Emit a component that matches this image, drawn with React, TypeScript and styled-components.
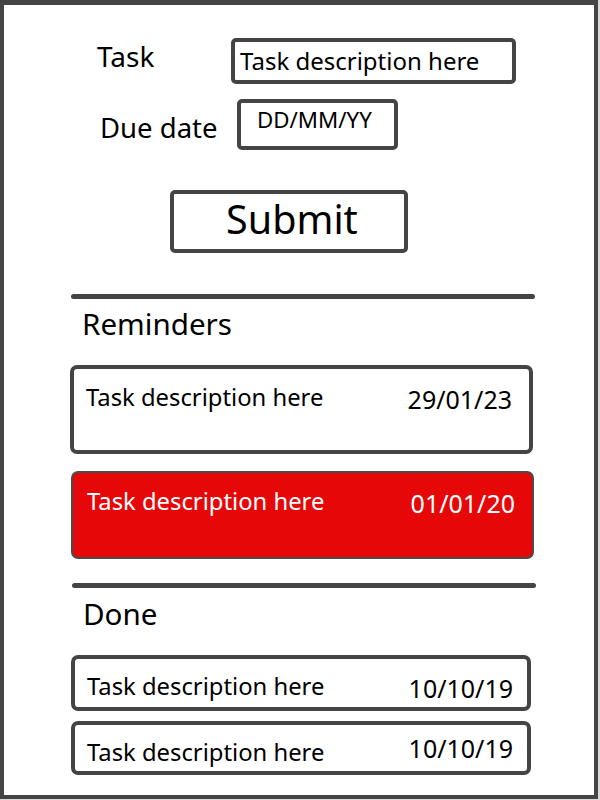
import React from "react";
import styled, { createGlobalStyle } from "styled-components";

const Global = createGlobalStyle`
  html, body { margin: 0; padding: 0; background: #d9d9d9; }
  body { font-family: "Noto Sans", "Open Sans", sans-serif; color: #000; }
`;

const Frame = styled.div`
  box-sizing: border-box;
  width: 598px;
  height: 799px;
  background: #fff;
  border: 4px solid #444;
  border-top-width: 5px;
  display: flex;
  flex-direction: column;
  overflow: hidden;
`;

const FieldRow = styled.div<{ $top: number }>`
  display: flex;
  align-items: center;
  margin-top: ${(p) => p.$top}px;
`;

const Label = styled.div<{ $left: number; $width: number; $shift: number; $size: number }>`
  margin-left: ${(p) => p.$left}px;
  width: ${(p) => p.$width}px;
  font-size: ${(p) => p.$size}px;
  line-height: 1;
  transform: translateY(${(p) => p.$shift}px);
`;

const InputBox = styled.div<{ $w: number; $h: number; $size: number; $pad: number; $shift: number }>`
  box-sizing: border-box;
  width: ${(p) => p.$w}px;
  height: ${(p) => p.$h}px;
  border: 4px solid #444;
  border-radius: 5px;
  display: flex;
  align-items: center;
  padding-left: ${(p) => p.$pad}px;
  font-size: ${(p) => p.$size}px;
  line-height: 1;
  span { transform: translateY(${(p) => p.$shift}px); }
`;

const SubmitButton = styled.button`
  box-sizing: border-box;
  margin: 40px 0 0 166px;
  width: 238px;
  height: 63px;
  border: 4px solid #444;
  border-radius: 5px;
  background: #fff;
  font-family: inherit;
  font-size: 39.5px;
  line-height: 1;
  color: #000;
  padding: 0 0 4px 6px;
  display: flex;
  align-items: center;
  justify-content: center;
`;

const Divider = styled.div<{ $top: number; $left: number }>`
  margin: ${(p) => p.$top}px 0 0 ${(p) => p.$left}px;
  width: 464px;
  height: 5px;
  border-radius: 3px;
  background: #444;
`;

const Heading = styled.div<{ $top: number; $left: number }>`
  margin: ${(p) => p.$top}px 0 0 ${(p) => p.$left}px;
  font-size: 29.6px;
  line-height: 1;
`;

const Card = styled.div<{ $top: number; $left: number; $w: number; $h: number; $alert?: boolean; $padTop: number; $padRight: number }>`
  box-sizing: border-box;
  margin: ${(p) => p.$top}px 0 0 ${(p) => p.$left}px;
  width: ${(p) => p.$w}px;
  height: ${(p) => p.$h}px;
  border: ${(p) => (p.$alert ? "2px solid #4a4a4a" : "4px solid #444")};
  border-radius: 7px;
  background: ${(p) => (p.$alert ? "#e60808" : "#fff")};
  color: ${(p) => (p.$alert ? "#fff" : "#000")};
  display: flex;
  justify-content: space-between;
  align-items: flex-start;
  padding: ${(p) => p.$padTop}px ${(p) => p.$padRight}px 0 ${(p) => (p.$alert ? 14 : 12)}px;
`;

const CardText = styled.span`
  font-size: 23.8px;
  line-height: 1;
`;

const CardDate = styled.span<{ $shift: number }>`
  font-size: 25px;
  line-height: 1;
  transform: translateY(${(p) => p.$shift}px);
`;

type Item = { text: string; date: string; alert?: boolean };

export default function App() {
  const reminders: Item[] = [
    { text: "Task description here", date: "29/01/23" },
    { text: "Task description here", date: "01/01/20", alert: true },
  ];
  const done: Item[] = [
    { text: "Task description here", date: "10/10/19" },
    { text: "Task description here", date: "10/10/19" },
  ];
  return (
    <>
      <Global />
      <Frame>
        <FieldRow $top={33}>
          <Label $left={93} $width={134} $shift={-5} $size={28}>Task</Label>
          <InputBox $w={285} $h={46} $size={24} $pad={5} $shift={0}>
            <span>Task description here</span>
          </InputBox>
        </FieldRow>
        <FieldRow $top={15}>
          <Label $left={96} $width={137} $shift={3} $size={27.5}>Due date</Label>
          <InputBox $w={161} $h={51} $size={22.3} $pad={16} $shift={-4}>
            <span>DD/MM/YY</span>
          </InputBox>
        </FieldRow>
        <SubmitButton>Submit</SubmitButton>
        <Divider $top={41} $left={67} />
        <Heading $top={10} $left={78}>Reminders</Heading>
        <Card $top={26} $left={66} $w={463} $h={89} $padTop={17} $padRight={17}>
          <CardText>{reminders[0].text}</CardText>
          <CardDate $shift={1}>{reminders[0].date}</CardDate>
        </Card>
        <Card $top={17} $left={67} $w={463} $h={88} $alert $padTop={17} $padRight={17}>
          <CardText>{reminders[1].text}</CardText>
          <CardDate $shift={1}>{reminders[1].date}</CardDate>
        </Card>
        <Divider $top={24} $left={68} />
        <Heading $top={11} $left={79}>Done</Heading>
        <Card $top={27} $left={67} $w={460} $h={56} $padTop={16} $padRight={14}>
          <CardText>{done[0].text}</CardText>
          <CardDate $shift={1}>{done[0].date}</CardDate>
        </Card>
        <Card $top={10} $left={67} $w={460} $h={54} $padTop={16} $padRight={14}>
          <CardText>{done[1].text}</CardText>
          <CardDate $shift={-5}>{done[1].date}</CardDate>
        </Card>
      </Frame>
    </>
  );
}
